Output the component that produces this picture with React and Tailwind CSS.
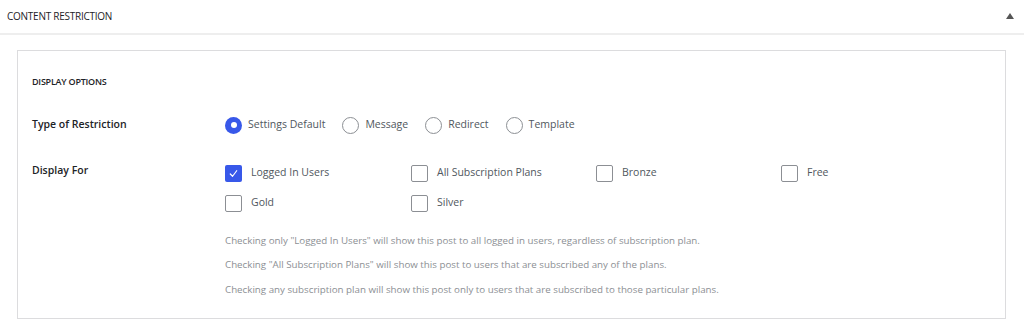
import { useState } from 'react';

const tipos = ['Settings Default', 'Message', 'Redirect', 'Template'];
const planes = ['Logged In Users', 'All Subscription Plans', 'Bronze', 'Free', 'Gold', 'Silver'];

export default function App() {
    const [tipo, setTipo] = useState('Settings Default');
    const [marcados, setMarcados] = useState(['Logged In Users']);

    const alternar = (p) =>
        setMarcados((m) => (m.includes(p) ? m.filter((x) => x !== p) : [...m, p]));

    return (
        <div className="w-[1024px] h-[331px] bg-white text-[#3c434a] overflow-hidden" style={{ fontFamily: '"Open Sans", "Noto Sans", sans-serif' }}>
            {/* cabecera del panel */}
            <div className="h-[35px] flex items-center justify-between pl-[7px] pr-[10px] border-b-2 border-[#eeeeee]">
                <span className="text-[10px] uppercase text-[#1d2327] tracking-tight">Content Restriction</span>
                <span className="w-0 h-0 border-l-[4px] border-r-[4px] border-b-[6px] border-l-transparent border-r-transparent border-b-[#555] mb-[2px]"></span>
            </div>

            <div className="pl-[17px] pr-[18px] pt-[15px]">
                <div className="border border-[#dcdcde] h-[269px] pl-[14px] pt-[24px]">
                    <p className="text-[9px] font-semibold uppercase text-[#1d2327] tracking-tight">Display Options</p>

                    <div className="flex mt-[28px] items-center">
                        <div className="w-[193px] text-[10.5px] font-semibold text-[#1d2327]">Type of Restriction</div>
                        <div className="flex items-center">
                            {tipos.map((t) => (
                                <label key={t} className="flex items-center mr-[17px] cursor-pointer" onClick={() => setTipo(t)}>
                                    <span className={`w-[17px] h-[17px] rounded-full flex items-center justify-center ${tipo === t ? 'bg-[#3858e9]' : 'border border-[#8c8f94] bg-white'}`}>
                                        {tipo === t && <span className="w-[6px] h-[6px] rounded-full bg-white"></span>}
                                    </span>
                                    <span className="ml-[6px] text-[10.5px] text-[#50575e]">{t}</span>
                                </label>
                            ))}
                        </div>
                    </div>

                    <div className="flex mt-[28px]">
                        <div className="w-[193px] text-[10.5px] font-semibold text-[#1d2327] pt-[1px]">Display For</div>
                        <div className="flex-1">
                            <div className="grid grid-cols-[186px_185px_185px_1fr] gap-y-[13px] mt-[3px]">
                                {planes.map((p) => (
                                    <label key={p} className="flex items-center cursor-pointer" onClick={() => alternar(p)}>
                                        <span className={`w-[17px] h-[17px] rounded-[2px] flex items-center justify-center ${marcados.includes(p) ? 'bg-[#3858e9]' : 'border border-[#8c8f94] bg-white'}`}>
                                            {marcados.includes(p) && (
                                                <svg width="11" height="11" viewBox="0 0 12 12" fill="none">
                                                    <path d="M2.5 6.5 L5 9 L9.5 3" stroke="white" strokeWidth="1.3" strokeLinecap="round" strokeLinejoin="round" />
                                                </svg>
                                            )}
                                        </span>
                                        <span className="ml-[9px] text-[10.5px] text-[#50575e]">{p}</span>
                                    </label>
                                ))}
                            </div>

                            <div className="mt-[22px] text-[9.75px] text-[#8c8f94] flex flex-col gap-[10px]">
                                <p>Checking only "Logged In Users" will show this post to all logged in users, regardless of subscription plan.</p>
                                <p>Checking "All Subscription Plans" will show this post to users that are subscribed any of the plans.</p>
                                <p>Checking any subscription plan will show this post only to users that are subscribed to those particular plans.</p>
                            </div>
                        </div>
                    </div>
                </div>
            </div>
        </div>
    );
}
